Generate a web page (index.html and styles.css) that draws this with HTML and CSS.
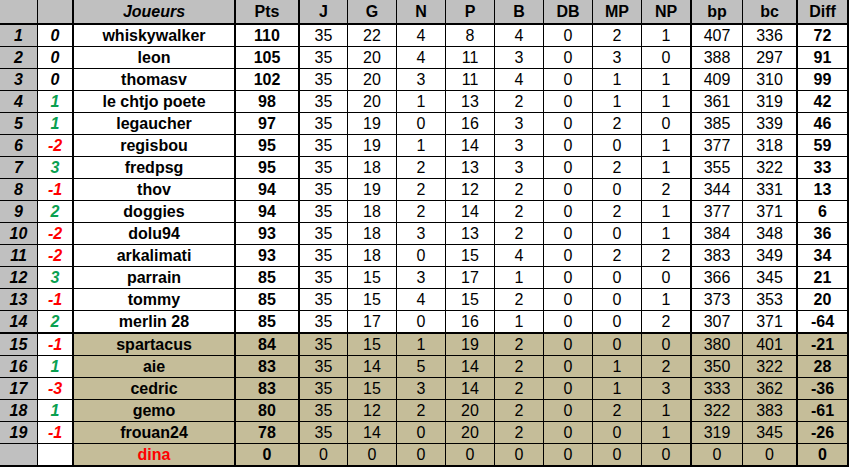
FILE: index.html
```html
<!DOCTYPE html>
<html>
<head>
<meta charset="utf-8">
<link rel="stylesheet" href="styles.css">
</head>
<body>
<div class="table">
  <div class="row head thick"><div></div><div></div><div class="it">Joueurs</div><div>Pts</div><div>J</div><div>G</div><div>N</div><div>P</div><div>B</div><div>DB</div><div>MP</div><div>NP</div><div>bp</div><div>bc</div><div>Diff</div></div>
  <div class="row"><div>1</div><div>0</div><div>whiskywalker</div><div>110</div><div>35</div><div>22</div><div>4</div><div>8</div><div>4</div><div>0</div><div>2</div><div>1</div><div>407</div><div>336</div><div>72</div></div>
  <div class="row"><div>2</div><div>0</div><div>leon</div><div>105</div><div>35</div><div>20</div><div>4</div><div>11</div><div>3</div><div>0</div><div>3</div><div>0</div><div>388</div><div>297</div><div>91</div></div>
  <div class="row"><div>3</div><div>0</div><div>thomasv</div><div>102</div><div>35</div><div>20</div><div>3</div><div>11</div><div>4</div><div>0</div><div>1</div><div>1</div><div>409</div><div>310</div><div>99</div></div>
  <div class="row"><div>4</div><div class="up">1</div><div>le chtjo poete</div><div>98</div><div>35</div><div>20</div><div>1</div><div>13</div><div>2</div><div>0</div><div>1</div><div>1</div><div>361</div><div>319</div><div>42</div></div>
  <div class="row"><div>5</div><div class="up">1</div><div>legaucher</div><div>97</div><div>35</div><div>19</div><div>0</div><div>16</div><div>3</div><div>0</div><div>2</div><div>0</div><div>385</div><div>339</div><div>46</div></div>
  <div class="row"><div>6</div><div class="down">-2</div><div>regisbou</div><div>95</div><div>35</div><div>19</div><div>1</div><div>14</div><div>3</div><div>0</div><div>0</div><div>1</div><div>377</div><div>318</div><div>59</div></div>
  <div class="row"><div>7</div><div class="up">3</div><div>fredpsg</div><div>95</div><div>35</div><div>18</div><div>2</div><div>13</div><div>3</div><div>0</div><div>2</div><div>1</div><div>355</div><div>322</div><div>33</div></div>
  <div class="row"><div>8</div><div class="down">-1</div><div>thov</div><div>94</div><div>35</div><div>19</div><div>2</div><div>12</div><div>2</div><div>0</div><div>0</div><div>2</div><div>344</div><div>331</div><div>13</div></div>
  <div class="row"><div>9</div><div class="up">2</div><div>doggies</div><div>94</div><div>35</div><div>18</div><div>2</div><div>14</div><div>2</div><div>0</div><div>2</div><div>1</div><div>377</div><div>371</div><div>6</div></div>
  <div class="row"><div>10</div><div class="down">-2</div><div>dolu94</div><div>93</div><div>35</div><div>18</div><div>3</div><div>13</div><div>2</div><div>0</div><div>0</div><div>1</div><div>384</div><div>348</div><div>36</div></div>
  <div class="row"><div>11</div><div class="down">-2</div><div>arkalimati</div><div>93</div><div>35</div><div>18</div><div>0</div><div>15</div><div>4</div><div>0</div><div>2</div><div>2</div><div>383</div><div>349</div><div>34</div></div>
  <div class="row"><div>12</div><div class="up">3</div><div>parrain</div><div>85</div><div>35</div><div>15</div><div>3</div><div>17</div><div>1</div><div>0</div><div>0</div><div>0</div><div>366</div><div>345</div><div>21</div></div>
  <div class="row"><div>13</div><div class="down">-1</div><div>tommy</div><div>85</div><div>35</div><div>15</div><div>4</div><div>15</div><div>2</div><div>0</div><div>0</div><div>1</div><div>373</div><div>353</div><div>20</div></div>
  <div class="row thick"><div>14</div><div class="up">2</div><div>merlin 28</div><div>85</div><div>35</div><div>17</div><div>0</div><div>16</div><div>1</div><div>0</div><div>0</div><div>2</div><div>307</div><div>371</div><div>-64</div></div>
  <div class="row tan"><div>15</div><div class="down">-1</div><div>spartacus</div><div>84</div><div>35</div><div>15</div><div>1</div><div>19</div><div>2</div><div>0</div><div>0</div><div>0</div><div>380</div><div>401</div><div>-21</div></div>
  <div class="row tan"><div>16</div><div class="up">1</div><div>aie</div><div>83</div><div>35</div><div>14</div><div>5</div><div>14</div><div>2</div><div>0</div><div>1</div><div>2</div><div>350</div><div>322</div><div>28</div></div>
  <div class="row tan"><div>17</div><div class="down">-3</div><div>cedric</div><div>83</div><div>35</div><div>15</div><div>3</div><div>14</div><div>2</div><div>0</div><div>1</div><div>3</div><div>333</div><div>362</div><div>-36</div></div>
  <div class="row tan"><div>18</div><div class="up">1</div><div>gemo</div><div>80</div><div>35</div><div>12</div><div>2</div><div>20</div><div>2</div><div>0</div><div>2</div><div>1</div><div>322</div><div>383</div><div>-61</div></div>
  <div class="row tan"><div>19</div><div class="down">-1</div><div>frouan24</div><div>78</div><div>35</div><div>14</div><div>0</div><div>20</div><div>2</div><div>0</div><div>0</div><div>1</div><div>319</div><div>345</div><div>-26</div></div>
  <div class="row tan thick"><div></div><div></div><div class="red">dina</div><div>0</div><div>0</div><div>0</div><div>0</div><div>0</div><div>0</div><div>0</div><div>0</div><div>0</div><div>0</div><div>0</div><div>0</div></div>
</div>
</body>
</html>
```

FILE: styles.css
```css
html, body {
  margin: 0;
  padding: 0;
  background: #ffffff;
}

.table {
  width: 849px;
  font-family: "Liberation Sans", Arial, sans-serif;
  font-size: 16px;
  color: #000;
}

.row {
  display: grid;
  grid-template-columns: 38px 36px 162px 64px 48px 49px 49px 49px 49px 49px 49px 50px 51px 55px 51px;
  height: 22px;
}

.row > div {
  box-sizing: border-box;
  border-right: 1px solid #000;
  border-bottom: 1px solid #000;
  display: flex;
  align-items: center;
  justify-content: center;
  white-space: nowrap;
  background: #ffffff;
  padding-top: 1px;
}

.row > div:nth-child(2),
.row > div:nth-child(3),
.row > div:nth-child(4),
.row > div:nth-child(12),
.row > div:nth-child(14),
.row > div:nth-child(15) {
  border-right-width: 2px;
}

.row.thick {
  height: 23px;
}

.row.thick > div {
  border-bottom-width: 2px;
}

.row.head {
  height: 25px;
}

.row.head > div {
  background: #c0c0c0;
  font-weight: bold;
}

.row > div:nth-child(1) {
  background: #c0c0c0;
  font-weight: bold;
  font-style: italic;
}

.row > div:nth-child(2) {
  font-weight: bold;
  font-style: italic;
}

.row > div:nth-child(3),
.row > div:nth-child(4),
.row > div:nth-child(15) {
  font-weight: bold;
}

.row.head > .it {
  font-style: italic;
}

.row.tan > div:nth-child(n+3) {
  background: #c5bd99;
}

.up {
  color: #0aa050;
}

.down {
  color: #ff0000;
}

.red {
  color: #ff0000;
}
```
